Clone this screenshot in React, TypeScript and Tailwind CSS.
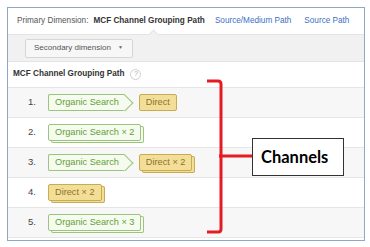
import React from 'react';

type Chip = { label: string; kind: 'green' | 'yellow'; stacked?: boolean; arrow?: boolean };

const rows: Chip[][] = [
  [
    { label: 'Organic Search', kind: 'green', arrow: true },
    { label: 'Direct', kind: 'yellow' },
  ],
  [{ label: 'Organic Search × 2', kind: 'green', stacked: true }],
  [
    { label: 'Organic Search', kind: 'green', arrow: true },
    { label: 'Direct × 2', kind: 'yellow', stacked: true },
  ],
  [{ label: 'Direct × 2', kind: 'yellow', stacked: true }],
  [{ label: 'Organic Search × 3', kind: 'green', stacked: true }],
];

function PathChip({ chip }: { chip: Chip }) {
  const green = chip.kind === 'green';
  const base = green
    ? 'bg-[#f6fbef] border-[#9cc47c] text-[#5f9f35]'
    : 'bg-[#f3de98] border-[#c9ab52] text-[#8c7327]';
  const shadow = chip.stacked
    ? green
      ? 'shadow-[3px_2px_0_-1px_#f6fbef,3px_2px_0_0_#9cc47c]'
      : 'shadow-[3px_2px_0_-1px_#f3de98,3px_2px_0_0_#c9ab52]'
    : '';
  return (
    <div
      className={`relative h-[17px] flex items-center pl-[6px] border rounded-[2px] text-[9.2px] leading-none ${base} ${shadow} ${
        chip.arrow ? 'border-r-0 rounded-r-none pr-[6px] mr-[14px]' : 'pr-[6px] mr-[6px]'
      }`}
    >
      <span className="relative z-10">{chip.label}</span>
      {chip.arrow && (
        <span className="absolute right-[-6px] top-[1.5px] w-[12px] h-[12px] rotate-45 bg-[#f6fbef] border-t border-r border-[#9cc47c]" />
      )}
    </div>
  );
}

export default function App() {
  return (
    <div
      className="relative w-[370px] h-[247px] bg-white pt-[7px] pl-[7px]"
      style={{ fontFamily: '"Liberation Sans", Arial, sans-serif' }}
    >
      <div className="w-[358px] h-[234px] border border-[#8fa9c4] flex flex-col">
        {/* primary dimension */}
        <div className="h-[26px] flex items-center pl-[9px] text-[8.2px] whitespace-nowrap">
          <span className="text-[#555]">Primary Dimension:</span>
          <span className="ml-[5px] font-bold text-[#333]">MCF Channel Grouping Path</span>
          <span className="ml-[10px] text-[#3b6fc4]">Source/Medium Path</span>
          <span className="ml-[13px] text-[#3b6fc4]">Source Path</span>
        </div>

        {/* secondary dimension band */}
        <div className="relative h-[28px] bg-[#f1f1f1] border-y border-[#e4e4e4] flex items-center pl-[17px]">
          <span className="absolute left-[142px] top-[-4px] w-[7px] h-[7px] rotate-45 bg-[#f1f1f1] border-l border-t border-[#e4e4e4]" />
          <div className="h-[19px] w-[108px] flex items-center justify-between pl-[8px] pr-[9px] bg-[#f7f7f7] border border-[#d6d6d6] rounded-[2px] text-[8px] text-[#555] whitespace-nowrap">
            <span>Secondary dimension</span>
            <span className="text-[5px] text-[#666]">▼</span>
          </div>
        </div>

        {/* table header */}
        <div className="h-[25px] flex items-center pl-[5px] text-[8.2px] font-bold text-[#333]">
          MCF Channel Grouping Path
          <span className="ml-[6px] w-[11px] h-[11px] rounded-full border border-[#cfcfcf] flex items-center justify-center text-[7px] font-normal text-[#aaa]">
            ?
          </span>
        </div>

        {/* rows */}
        <div className="flex flex-col border-t border-[#e6e6e6]">
          {rows.map((chips, i) => (
            <div
              key={i}
              className={`h-[30px] flex items-center border-b border-[#e6e6e6] ${
                i % 2 === 0 ? 'bg-[#f7f7f7]' : 'bg-white'
              }`}
            >
              <span className="w-[28px] text-right text-[9.5px] text-[#444]">{i + 1}.</span>
              <div className="ml-[12px] flex items-center">
                {chips.map((c, j) => (
                  <PathChip key={j} chip={c} />
                ))}
              </div>
            </div>
          ))}
        </div>
      </div>

      {/* annotation */}
      <svg className="absolute left-0 top-0 pointer-events-none" width="370" height="247">
        <path
          d="M207,81 L218,81 Q221,81 221,84 L221,229 Q221,232 218,232 L207,232"
          fill="none"
          stroke="#e41b23"
          strokeWidth="3"
        />
        <path d="M219,156 L252,156" fill="none" stroke="#e41b23" strokeWidth="3" />
      </svg>
      <div
        className="absolute left-[252px] top-[138px] w-[92px] h-[38px] bg-white border border-[#333] flex items-center pl-[8px] text-[16.5px] font-bold text-black"
        style={{ fontFamily: 'Lato, "Liberation Sans", sans-serif' }}
      >
        Channels
      </div>
    </div>
  );
}
